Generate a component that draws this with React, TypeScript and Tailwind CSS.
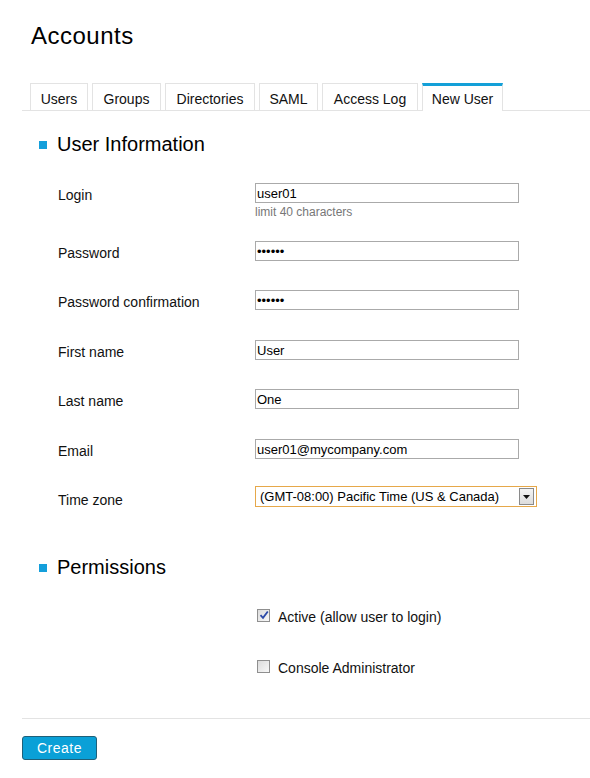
import { useState } from "react";

const tabs = [
  { name: "Users", w: 58 },
  { name: "Groups", w: 69 },
  { name: "Directories", w: 90 },
  { name: "SAML", w: 59 },
  { name: "Access Log", w: 96 },
  { name: "New User", w: 81 },
];

type Field = {
  label: string;
  value: string;
  type: "text" | "password";
  hint?: string;
  height: number;
};

const fields: Field[] = [
  { label: "Login", value: "user01", type: "text", hint: "limit 40 characters", height: 58 },
  { label: "Password", value: "secret", type: "password", height: 49 },
  { label: "Password confirmation", value: "secret", type: "password", height: 50 },
  { label: "First name", value: "User", type: "text", height: 49 },
  { label: "Last name", value: "One", type: "text", height: 50 },
  { label: "Email", value: "user01@mycompany.com", type: "text", height: 48 },
];

function SectionTitle({ title }: { title: string }) {
  return (
    <div className="flex items-center h-[24px] pl-[17px]">
      <span className="w-[8px] h-[8px] bg-[#149fdb] mr-[10px] mt-[2px]" />
      <span className="text-[20px] leading-[24px] text-black">{title}</span>
    </div>
  );
}

function Checkbox({ checked }: { checked: boolean }) {
  return (
    <span className="w-[13px] h-[13px] border border-[#8f8f8f] bg-gradient-to-br from-[#dcdcdc] to-[#f8f8f8] flex items-center justify-center">
      {checked && (
        <svg width="10" height="10" viewBox="0 0 10 10">
          <path d="M1.5 5.2 L4 7.8 L8.8 1.5" fill="none" stroke="#2c4aa8" strokeWidth="1.8" />
        </svg>
      )}
    </span>
  );
}

export default function App() {
  const [active, setActive] = useState(true);
  const [admin, setAdmin] = useState(false);

  return (
    <div className="w-[590px] min-h-[778px] bg-white pl-[22px] font-['Liberation_Sans',Arial,sans-serif] text-[14px] text-[#111]">
      <div className="pt-[22px] pl-[9px] text-[24px] leading-[28px] tracking-[0.5px] text-black">Accounts</div>

      {/* tabs */}
      <div className="mt-[33px] flex gap-[4px] pl-[8px] border-b border-[#e3e3e3] h-[28px]">
        {tabs.map((t) => {
          const selected = t.name === "New User";
          return (
            <div
              key={t.name}
              style={{ width: t.w }}
              className={
                selected
                  ? "text-center pt-[4px] h-[28px] border-x border-[#e3e3e3] border-t-[3px] border-t-[#13a0d8] bg-white -mb-px leading-[18px]"
                  : "text-center pt-[6px] h-[27px] border-x border-t border-[#e3e3e3] leading-[18px]"
              }
            >
              {t.name}
            </div>
          );
        })}
      </div>

      <div className="mt-[21px]">
        <SectionTitle title="User Information" />
      </div>

      <div className="mt-[27px] pl-[36px]">
        {fields.map((f) => (
          <div key={f.label} className="flex" style={{ height: f.height }}>
            <div className="w-[197px] h-[20px] flex items-center pt-[4px]">{f.label}</div>
            <div className="flex flex-col">
              <input
                type={f.type}
                defaultValue={f.value}
                className="w-[264px] h-[20px] border border-[#aaaaaa] px-[1px] text-[13px] text-black outline-none"
              />
              {f.hint && <div className="mt-[2px] text-[12px] leading-[15px] text-[#777]">{f.hint}</div>}
            </div>
          </div>
        ))}

        <div className="flex">
          <div className="w-[197px] h-[22px] flex items-center pt-[4px]">Time zone</div>
          <div className="w-[282px] h-[21px] -mt-px border border-[#e6a84a] flex items-center justify-between pl-[4px] pr-[2px] text-[13px] text-black">
            <span>(GMT-08:00) Pacific Time (US &amp; Canada)</span>
            <span className="w-[15px] h-[17px] border border-[#8a8a8a] bg-gradient-to-b from-[#f4f4f4] to-[#dcdcdc] flex items-center justify-center">
              <svg width="7" height="4" viewBox="0 0 7 4">
                <path d="M0 0 H7 L3.5 4 Z" fill="#111" />
              </svg>
            </span>
          </div>
        </div>
      </div>

      <div className="mt-[46px]">
        <SectionTitle title="Permissions" />
      </div>

      <div className="mt-[27px] pl-[235px] flex flex-col gap-[33px]">
        <label className="flex items-center gap-[8px] h-[18px] cursor-pointer" onClick={() => setActive(!active)}>
          <Checkbox checked={active} />
          <span className="mt-[5px]">Active (allow user to login)</span>
        </label>
        <label className="flex items-center gap-[8px] h-[18px] cursor-pointer" onClick={() => setAdmin(!admin)}>
          <Checkbox checked={admin} />
          <span className="mt-[5px]">Console Administrator</span>
        </label>
      </div>

      <div className="mt-[43px] border-t border-[#e3e3e3]" />

      <button className="mt-[17px] w-[75px] h-[24px] bg-[#0aa0d7] border border-[#1f6079] rounded-[3px] text-white text-[14px] tracking-[0.5px] leading-[20px]">
        Create
      </button>
    </div>
  );
}
